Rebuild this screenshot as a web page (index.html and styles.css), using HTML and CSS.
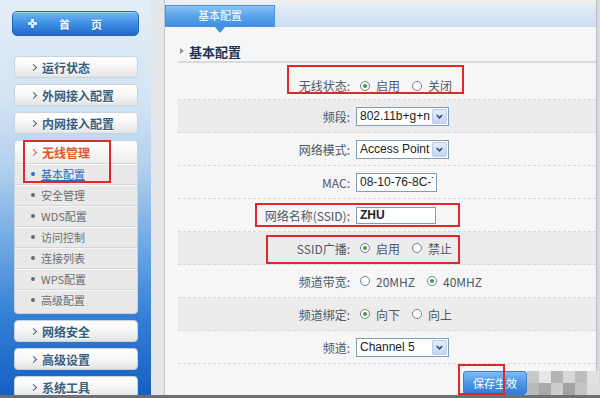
FILE: index.html
```html
<!DOCTYPE html>
<html lang="zh-CN">
<head>
    <meta charset="UTF-8">
    <title>无线管理 - 基本配置</title>
    <link rel="stylesheet" href="styles.css">
</head>
<body>
    <div class="page">
        <aside class="sidebar">
            <a class="home">
                <svg class="home-icon" width="9" height="9" viewBox="0 0 9 9">
                    <path d="M4.5 1 V8 M1 4.5 H8" stroke="#fff" stroke-width="2.6" stroke-linecap="round"/>
                    <circle cx="4.5" cy="4.5" r="1" fill="#3a86d8"/>
                </svg>
                <span class="home-text">首　页</span>
            </a>
            <ul class="menu">
                <li class="menu-item"><i class="chev"></i>运行状态</li>
                <li class="menu-item"><i class="chev"></i>外网接入配置</li>
                <li class="menu-item"><i class="chev"></i>内网接入配置</li>
                <li class="menu-group">
                    <div class="group-title"><i class="chev"></i>无线管理</div>
                    <ul class="sub">
                        <li class="sub-item active">基本配置</li>
                        <li class="sub-item">安全管理</li>
                        <li class="sub-item">WDS配置</li>
                        <li class="sub-item">访问控制</li>
                        <li class="sub-item">连接列表</li>
                        <li class="sub-item">WPS配置</li>
                        <li class="sub-item">高级配置</li>
                    </ul>
                </li>
                <li class="menu-item"><i class="chev"></i>网络安全</li>
                <li class="menu-item"><i class="chev"></i>高级设置</li>
                <li class="menu-item"><i class="chev"></i>系统工具</li>
            </ul>
        </aside>
        <div class="gutter"></div>
        <main class="main">
            <div class="tabs">
                <div class="tab">基本配置</div>
            </div>
            <div class="content">
                <h2 class="section-title"><i class="tri"></i>基本配置</h2>
                <div class="form">
                    <div class="row first">
                        <span class="row-label">无线状态:</span>
                        <span class="row-field">
                            <span class="opt"><i class="radio on"></i>启用</span>
                            <span class="opt"><i class="radio"></i>关闭</span>
                        </span>
                    </div>
                    <div class="row shade">
                        <span class="row-label">频段:</span>
                        <span class="row-field">
                            <span class="select"><span class="select-value">802.11b+g+n</span><span class="select-btn"><svg width="7" height="5" viewBox="0 0 7 5"><path d="M0.8 1 L3.5 3.8 L6.2 1" fill="none" stroke="#2b4a6e" stroke-width="1.5"/></svg></span></span>
                        </span>
                    </div>
                    <div class="row">
                        <span class="row-label">网络模式:</span>
                        <span class="row-field">
                            <span class="select"><span class="select-value">Access Point</span><span class="select-btn"><svg width="7" height="5" viewBox="0 0 7 5"><path d="M0.8 1 L3.5 3.8 L6.2 1" fill="none" stroke="#2b4a6e" stroke-width="1.5"/></svg></span></span>
                        </span>
                    </div>
                    <div class="row">
                        <span class="row-label">MAC:</span>
                        <span class="row-field">
                            <input class="text-input mac" type="text" value="08-10-76-8C-7A-3E" readonly>
                        </span>
                    </div>
                    <div class="row">
                        <span class="row-label">网络名称(SSID):</span>
                        <span class="row-field">
                            <input class="text-input ssid" type="text" value="ZHU">
                        </span>
                    </div>
                    <div class="row shade">
                        <span class="row-label">SSID广播:</span>
                        <span class="row-field">
                            <span class="opt"><i class="radio on"></i>启用</span>
                            <span class="opt"><i class="radio"></i>禁止</span>
                        </span>
                    </div>
                    <div class="row">
                        <span class="row-label">频道带宽:</span>
                        <span class="row-field">
                            <span class="opt"><i class="radio"></i>20MHZ</span>
                            <span class="opt"><i class="radio on"></i>40MHZ</span>
                        </span>
                    </div>
                    <div class="row shade">
                        <span class="row-label">频道绑定:</span>
                        <span class="row-field">
                            <span class="opt"><i class="radio on"></i>向下</span>
                            <span class="opt"><i class="radio"></i>向上</span>
                        </span>
                    </div>
                    <div class="row">
                        <span class="row-label">频道:</span>
                        <span class="row-field">
                            <span class="select"><span class="select-value">Channel 5</span><span class="select-btn"><svg width="7" height="5" viewBox="0 0 7 5"><path d="M0.8 1 L3.5 3.8 L6.2 1" fill="none" stroke="#2b4a6e" stroke-width="1.5"/></svg></span></span>
                        </span>
                    </div>
                    <div class="actions">
                        <button class="save-btn" type="button">保存生效</button>
                    </div>
                </div>
            </div>
        </main>
    </div>
    <div class="footer-strip"></div>

    <!-- annotations drawn over the screenshot -->
    <div class="mark mark-menu"></div>
    <div class="mark mark-status"></div>
    <div class="mark mark-ssid"></div>
    <div class="mark mark-broadcast"></div>
    <div class="mark mark-save"></div>

    <div class="mosaic">
        <i style="background:#c9c9c9"></i><i style="background:#e6e6e6"></i><i style="background:#b4b4b4"></i><i style="background:#d8d8d8"></i><i style="background:#bdbdbd"></i><i style="background:#e2e2e2"></i>
        <i style="background:#b9b9b9"></i><i style="background:#a9a9a9"></i><i style="background:#cdcdcd"></i><i style="background:#a2a2a2"></i><i style="background:#c4c4c4"></i><i style="background:#dedede"></i>
    </div>
</body>
</html>
```

FILE: styles.css
```css
* {
    box-sizing: border-box;
}

body {
    margin: 0;
    width: 600px;
    height: 398px;
    overflow: hidden;
    position: relative;
    background: #d8dadd;
    font-family: "Noto Sans CJK SC", "Liberation Sans", sans-serif;
    font-size: 12px;
}

ul {
    list-style: none;
    margin: 0;
    padding: 0;
}

.page {
    display: flex;
    height: 395px;
    overflow: hidden;
}

/* ---------- sidebar ---------- */
.sidebar {
    width: 151px;
    flex: none;
    padding-top: 11px;
    background: linear-gradient(to bottom, #e4eef7 0%, #d3e4f3 25%, #b3d1ee 42%, #6fa8e3 62%, #3480d6 80%, #1560c3 100%);
}

.home {
    display: flex;
    align-items: center;
    width: 127px;
    height: 25px;
    margin-left: 12px;
    padding-left: 15px;
    border: 1px solid #2565b8;
    border-radius: 5px;
    background: linear-gradient(to bottom, #74b6f3 0%, #3f90e3 50%, #2268c8 100%);
    box-shadow: inset 0 1px 0 rgba(255, 255, 255, 0.4);
}

.home-text {
    margin-left: 22px;
    color: #f2f6fb;
    font-size: 11px;
    font-weight: bold;
    letter-spacing: 5px;
    text-shadow: 0 1px 1px rgba(0, 0, 0, 0.2);
}

.menu {
    margin-top: 20px;
    margin-left: 14px;
    width: 124px;
    display: flex;
    flex-direction: column;
    gap: 6px;
}

.menu-item {
    display: flex;
    align-items: center;
    height: 22px;
    padding-left: 16px;
    border: 1px solid #c6d3df;
    border-radius: 4px;
    background: linear-gradient(to bottom, #ffffff 0%, #f6f6f6 50%, #e4e4e4 100%);
    color: #36607f;
    font-size: 12px;
    font-weight: bold;
    text-shadow: 0 1px 0 #fff;
}

.chev {
    width: 5px;
    height: 5px;
    margin-right: 6px;
    border-right: 1.5px solid #4a5f73;
    border-bottom: 1.5px solid #4a5f73;
    transform: rotate(-45deg);
}

.menu-group {
    border: 1px solid #c6d3df;
    border-radius: 4px;
    background: #e9e9e9;
    padding-bottom: 3px;
    overflow: hidden;
}

.group-title {
    display: flex;
    align-items: center;
    height: 22px;
    padding-left: 16px;
    background: linear-gradient(to bottom, #ffffff, #ededed);
    color: #e4572a;
    font-size: 12px;
    font-weight: bold;
}

.group-title .chev {
    border-color: #e4572a;
}

.sub-item {
    display: flex;
    align-items: center;
    height: 21px;
    padding-left: 16px;
    border-top: 1px solid #d6d6d6;
    box-shadow: inset 0 1px 0 #f7f7f7;
    color: #6e6e6e;
    font-size: 11px;
}

.sub-item::before {
    content: '';
    width: 4px;
    height: 4px;
    margin-right: 6px;
    border-radius: 50%;
    background: #6a6a6a;
}

.sub-item.active {
    color: #2c6cc2;
    text-decoration: underline;
}

.sub-item.active::before {
    background: #2c6cc2;
}

.gutter {
    width: 14px;
    flex: none;
    background: #e4e6e9;
    border-right: 1px solid #bfc4c9;
}

/* ---------- main panel ---------- */
.main {
    width: 432px;
    flex: none;
    display: flex;
    flex-direction: column;
    padding-top: 5px;
    background: #eceef0;
    border-right: 1px solid #b8bcc1;
}

.tabs {
    display: flex;
    height: 22px;
    background: linear-gradient(to bottom, #e3edf7, #cbdcee);
}

.tab {
    position: relative;
    width: 110px;
    height: 22px;
    border: 1px solid #4d93dc;
    background: linear-gradient(to bottom, #8cc4f3 0%, #5aa2ea 50%, #3f8fe0 100%);
    color: #fff;
    font-size: 11px;
    line-height: 19px;
    text-align: center;
}

.tab::after {
    content: '';
    position: absolute;
    left: 50%;
    bottom: -7px;
    margin-left: -5px;
    border-left: 5px solid transparent;
    border-right: 5px solid transparent;
    border-top: 6px solid #3f8fe0;
}

.content {
    flex: 1;
    padding: 14px 0 0 13px;
    background: #f6f6f6;
}

.section-title {
    display: flex;
    align-items: center;
    height: 22px;
    margin: 0;
    border-bottom: 2px solid #d8dbde;
    color: #1d3556;
    font-size: 13px;
    font-weight: bold;
}

.tri {
    margin: 0 5px 0 2px;
    border-top: 3px solid transparent;
    border-bottom: 3px solid transparent;
    border-left: 4px solid #8794a2;
}

.row {
    display: flex;
    align-items: center;
    height: 33px;
    border-bottom: 1px dashed #d8d8d8;
    color: #4e5866;
    font-size: 12px;
}

.row.first {
    height: 37px;
    padding-top: 9px;
}

.row.shade {
    background: #ececec;
}

.row-label {
    width: 172px;
    text-align: right;
}

.row-field {
    display: flex;
    align-items: center;
    margin-left: 6px;
}

.opt {
    display: inline-flex;
    align-items: center;
    margin-right: 8px;
}

.radio {
    position: relative;
    width: 10px;
    height: 10px;
    margin: 0 6px 0 4px;
    border: 1px solid #6c8297;
    border-radius: 50%;
    background: #fff;
}

.radio.on::after {
    content: '';
    position: absolute;
    left: 2px;
    top: 2px;
    width: 4px;
    height: 4px;
    border-radius: 50%;
    background: #3f9b45;
}

.select {
    display: flex;
    align-items: center;
    width: 93px;
    height: 19px;
    border: 1px solid #7f9db9;
    background: #fff;
    font-family: "Liberation Sans", Arial, sans-serif;
    font-size: 12px;
    color: #222;
}

.select-value {
    flex: 1;
    padding-left: 3px;
    white-space: nowrap;
    overflow: hidden;
}

.select-btn {
    display: flex;
    align-items: center;
    justify-content: center;
    width: 15px;
    height: 15px;
    margin-right: 1px;
    border: 1px solid #b9cdea;
    border-radius: 2px;
    background: linear-gradient(to bottom, #e3ecfa, #c4d6f2);
}

.text-input {
    height: 19px;
    padding: 0 3px;
    border: 1px solid #7f9db9;
    background: #fff;
    font-family: "Liberation Sans", Arial, sans-serif;
    font-size: 12px;
    color: #222;
    outline: none;
}

.text-input.mac {
    width: 81px;
}

.text-input.ssid {
    width: 80px;
    height: 17px;
    font-weight: bold;
}

.actions {
    display: flex;
    padding: 7px 0 0 285px;
}

.save-btn {
    width: 64px;
    height: 24px;
    padding: 0;
    border: 1px solid #3a7fd0;
    border-radius: 3px;
    background: linear-gradient(to bottom, #7fbaf2 0%, #4d98e6 50%, #2f7dd6 100%);
    color: #fff;
    font-family: "Noto Sans CJK SC", sans-serif;
    font-size: 11px;
}

.footer-strip {
    height: 3px;
    background: #6c6f73;
}

/* ---------- annotations over the screenshot ---------- */
.mark {
    position: absolute;
    border: 2px solid #e3262b;
}

.mark-menu { left: 23px; top: 140px; width: 88px; height: 43px; }
.mark-status { left: 287px; top: 65px; width: 177px; height: 29px; }
.mark-ssid { left: 255px; top: 203px; width: 205px; height: 24px; }
.mark-broadcast { left: 266px; top: 235px; width: 194px; height: 29px; }
.mark-save { left: 458px; top: 364px; width: 47px; height: 31px; }

.mosaic {
    position: absolute;
    left: 527px;
    top: 371px;
    display: grid;
    grid-template-columns: repeat(6, 12px);
    grid-auto-rows: 12px;
}
```
